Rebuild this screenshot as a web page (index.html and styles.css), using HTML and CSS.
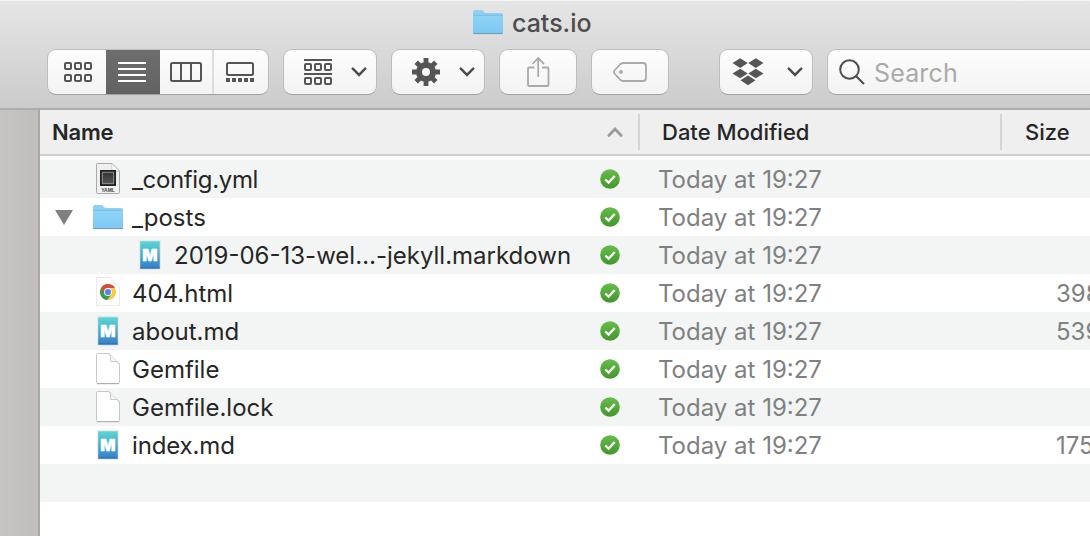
FILE: index.html
```html
<!DOCTYPE html>
<html lang="en">
<head>
<meta charset="utf-8">
<title>cats.io</title>
<link rel="stylesheet" href="styles.css">
</head>
<body>
<svg class="defs" aria-hidden="true">
  <defs>
    <linearGradient id="blue" x2="0" y2="1"><stop stop-color="#90d5f7"/><stop offset="1" stop-color="#7cc7f3"/></linearGradient>
    <linearGradient id="teal" x2="0" y2="1"><stop stop-color="#5bd6d3"/><stop offset="1" stop-color="#347fc9"/></linearGradient>
    <linearGradient id="green" x2="0" y2="1"><stop stop-color="#65bd4b"/><stop offset="1" stop-color="#43962b"/></linearGradient>
    <linearGradient id="dark" x2="0" y2="1"><stop stop-color="#333"/><stop offset="1" stop-color="#555"/></linearGradient>
    <linearGradient id="fold" x1="0" y1="1" x2="1" y2="0"><stop stop-color="#fff"/><stop offset=".5" stop-color="#f2f2f2"/><stop offset="1" stop-color="#bbb"/></linearGradient>
    <symbol id="folder" viewBox="0 0 32 28">
      <path d="M1 5Q1 2 3 2H9Q11 2 12 4Q13 5 15 5H29Q31 5 31 7V25H1Z" fill="#8fd0f2"/>
      <path d="M1 7H31V24.5Q31 25.5 30 25.5H2Q1 25.5 1 24.5Z" fill="url(#blue)"/>
      <path d="M1 7.3H31" stroke="#6fb9e2" stroke-width=".8"/>
      <path d="M1.2 25.6H30.8" stroke="#6798b3" stroke-width="1"/>
    </symbol>
    <symbol id="page" viewBox="0 0 26 34">
      <path d="M2.5 1.5H14L24.5 12V30.5Q24.5 31.5 23.5 31.5H2.5Q1.5 31.5 1.5 30.5V2.5Q1.5 1.5 2.5 1.5Z" fill="#fff" stroke="#c8c8c8"/>
      <path d="M2 31.7H24" stroke="#aaa" stroke-width="1"/>
      <path d="M14.5 1.7Q16 3 15.6 9.5H22Q23.5 10 24.3 12" fill="url(#fold)" stroke="#c4c4c4" stroke-width=".9"/>
    </symbol>
    <symbol id="yaml" viewBox="0 0 26 34">
      <path d="M2.5 1.5H17L24.5 9V30.5Q24.5 31.5 23.5 31.5H2.5Q1.5 31.5 1.5 30.5V2.5Q1.5 1.5 2.5 1.5Z" fill="#efefef" stroke="#aaa"/>
      <path d="M17 1.7V9H24.3Z" fill="#fff" stroke="#bbb" stroke-width=".7"/>
      <path d="M5 8H21V24H5Z" fill="#222"/>
      <path d="M7.3 10.3H18.7V21.7H7.3Z" fill="url(#dark)" stroke="#aaa" stroke-width=".8"/>
      <text x="13" y="29.5" class="yaml-label">YAML</text>
    </symbol>
    <symbol id="md" viewBox="0 0 22 30">
      <path d="M.5.5H21.5V29.5H.5Z" fill="#d5dde0"/>
      <path d="M1.3 1.3H20.7V28.5H1.3Z" fill="url(#teal)"/>
      <path d="M1.3 28H20.7" stroke="#2c69ba" stroke-width="1"/>
      <text x="11" y="20.6" class="md-label">M</text>
    </symbol>
    <symbol id="chrome" viewBox="0 0 26 34">
      <path d="M1.5 1.5H15L24.5 11V29.5H1.5Z" fill="#fefefe" stroke="#e9e9e9"/>
      <path d="M14 2Q16 3 16 7Q22 7 24.3 11Z" fill="url(#fold)"/>
      <circle cx="13" cy="16" r="8" fill="#f7cc45"/>
      <path d="M13 16L6.1 12A8 8 0 0 0 12.2 24L16.5 18Z" fill="#379b53"/>
      <path d="M13 16L9.5 18L6.1 12A8 8 0 0 1 20 12H13Z" fill="#d84c3f"/>
      <circle cx="13" cy="16" r="4" fill="#f4f4f4"/>
      <circle cx="13" cy="16" r="3.1" fill="#5089ee"/>
    </symbol>
    <symbol id="check" viewBox="0 0 20 20">
      <circle cx="10" cy="10" r="9.8" fill="url(#green)"/>
      <path d="M5.3 10.5L8.6 13.6L14.7 7" fill="none" stroke="#fff" stroke-width="2.3"/>
    </symbol>
    <symbol id="chevron" viewBox="0 0 16 10"><path d="M1.8 1.7L8 7.9L14.2 1.7" fill="none" stroke="#4d4d4d" stroke-width="2.5" stroke-linecap="round"/></symbol>
    <symbol id="squares" viewBox="0 0 28 8"><path d="M2 1H6Q7 1 7 2V6Q7 7 6 7H2Q1 7 1 6V2Q1 1 2 1ZM12 1H16Q17 1 17 2V6Q17 7 16 7H12Q11 7 11 6V2Q11 1 12 1ZM22 1H26Q27 1 27 2V6Q27 7 26 7H22Q21 7 21 6V2Q21 1 22 1Z" fill="none" stroke="#555" stroke-width="2"/></symbol>
  </defs>
</svg>
<div class="window">
  <header class="chrome-bar">
    <div class="title"><svg width="32" height="28"><use href="#folder"/></svg><span>cats.io</span></div>
    <div class="toolbar">
      <div class="button views">
        <span class="view icons"><svg width="28" height="20"><use href="#squares" width="28" height="8"/><use href="#squares" y="12" width="28" height="8"/></svg></span>
        <span class="view active"><svg width="28" height="20"><path d="M0 1H28M0 7H28M0 13H28M0 19H28" stroke="#fff" stroke-width="2"/></svg></span>
        <span class="view columns"><svg width="32" height="20" fill="none" stroke="#555" stroke-width="2"><rect x="1" y="1" width="30" height="18" rx="1.5"/><path d="M11 1V19M21 1V19"/></svg></span>
        <span class="view gallery"><svg width="28" height="20"><rect x="1" y="1" width="26" height="12" rx="1.5" fill="none" stroke="#555" stroke-width="2"/><path d="M0 18H28" stroke="#555" stroke-width="4" stroke-dasharray="4 2"/></svg></span>
      </div>
      <div class="button menu">
        <svg width="28" height="26"><path d="M0 1H28M0 15H28" stroke="#555" stroke-width="2"/><use href="#squares" y="4" width="28" height="8"/><use href="#squares" y="18" width="28" height="8"/></svg>
        <svg width="16" height="10"><use href="#chevron"/></svg>
      </div>
      <div class="button menu gear">
        <svg width="28" height="28" viewBox="-14 -14 28 28"><circle r="7" fill="none" stroke="#555" stroke-width="6"/><g stroke="#555" stroke-width="4.8" stroke-linejoin="round"><path d="M0-14V-8M0 14V8M-14 0H-8M14 0H8M-9.8-9.8L-6-6M9.8 9.8L6 6M9.8-9.8L6-6M-9.8 9.8L-6 6"/></g></svg>
        <svg width="16" height="10"><use href="#chevron"/></svg>
      </div>
      <div class="button single share"><svg width="24" height="32" fill="none" stroke="#aaa" stroke-width="1.8"><path d="M8.5 11.5H3Q2 11.5 2 12.5V29Q2 30 3 30H21.5Q22.5 30 22.5 29V12.5Q22.5 11.5 21.5 11.5H16M12.2 21V2M6.5 8L12.2 2L18 8"/></svg></div>
      <div class="button single tag"><svg width="34" height="20"><path d="M10 1H30Q33 1 33 4V16Q33 19 30 19H10Q8.500 19 7 17.500L1.500 11.500Q.500 10 1.500 8.500L7 2.500Q8.500 1 10 1Z" fill="none" stroke="#aaa" stroke-width="1.800"/><circle cx="8" cy="10" r="2" fill="#aaa"/></svg></div>
      <div class="button menu dropbox">
        <svg width="32" height="28" fill="#555"><path d="M8.200.300L15.700 5.100L8.200 9.900L.500 5.100ZM23.800.300L31.500 5.100L23.800 9.900L16.300 5.100ZM8.200 10.700L15.700 15.500L8.200 20.300L.500 15.500ZM23.800 10.700L31.500 15.500L23.800 20.300L16.300 15.500ZM16 17.400L23.500 22.200L16 27.300L8.500 22.200Z"/></svg>
        <svg width="16" height="10"><use href="#chevron"/></svg>
      </div>
      <div class="button search"><svg width="26" height="26" fill="none" stroke="#4d4d4d" stroke-width="2"><circle cx="10.500" cy="10.500" r="9.300"/><path d="M17.200 17.200L25 25"/></svg><span>Search</span></div>
    </div>
  </header>
  <div class="body">
    <aside class="sidebar"></aside>
    <main class="list">
      <div class="head">
        <div class="h-name"><span>Name</span><svg width="16" height="10"><path d="M1.800 8.500L8 2L14.200 8.500" fill="none" stroke="#999" stroke-width="2.600" stroke-linecap="round"/></svg></div>
        <div class="h-date"><span>Date Modified</span></div>
        <div class="h-size"><span>Size</span></div>
      </div>
      <div class="rows">
        <div class="row"><span class="arrow"></span><svg class="file" width="26" height="34"><use href="#yaml"/></svg><span class="name tight">_config.yml</span><svg class="ok"><use href="#check"/></svg><span class="date">Today at 19:27</span></div>
        <div class="row"><span class="arrow"><svg width="18" height="15"><path d="M0 0H18L9 15Z" fill="#808080"/></svg></span><svg class="file" width="32" height="28"><use href="#folder"/></svg><span class="name">_posts</span><svg class="ok"><use href="#check"/></svg><span class="date">Today at 19:27</span></div>
        <div class="row nested"><span class="arrow"></span><svg class="file" width="22" height="30"><use href="#md"/></svg><span class="name">2019-06-13-wel…-jekyll.markdown</span><svg class="ok"><use href="#check"/></svg><span class="date">Today at 19:27</span></div>
        <div class="row"><span class="arrow"></span><svg class="file" width="26" height="34"><use href="#chrome"/></svg><span class="name">404.html</span><svg class="ok"><use href="#check"/></svg><span class="date">Today at 19:27</span><span class="size">398</span></div>
        <div class="row"><span class="arrow"></span><svg class="file" width="22" height="30"><use href="#md"/></svg><span class="name">about.md</span><svg class="ok"><use href="#check"/></svg><span class="date">Today at 19:27</span><span class="size">539</span></div>
        <div class="row"><span class="arrow"></span><svg class="file" width="26" height="34"><use href="#page"/></svg><span class="name">Gemfile</span><svg class="ok"><use href="#check"/></svg><span class="date">Today at 19:27</span></div>
        <div class="row"><span class="arrow"></span><svg class="file" width="26" height="34"><use href="#page"/></svg><span class="name">Gemfile.lock</span><svg class="ok"><use href="#check"/></svg><span class="date">Today at 19:27</span></div>
        <div class="row"><span class="arrow"></span><svg class="file" width="22" height="30"><use href="#md"/></svg><span class="name snug">index.md</span><svg class="ok"><use href="#check"/></svg><span class="date">Today at 19:27</span><span class="size">175</span></div>
        <div class="row"></div>
      </div>
    </main>
  </div>
</div>
</body>
</html>
```
FILE: styles.css
```css
* { box-sizing: border-box; }
body { margin: 0; font-family: Inter, "Liberation Sans", sans-serif; font-size: 24px; color: #262626; overflow: hidden; }
.defs { position: absolute; width: 0; height: 0; }
svg { display: block; flex: none; }
span { white-space: nowrap; }
.window { width: 1090px; height: 536px; display: flex; flex-direction: column; overflow: hidden; }
.chrome-bar { height: 110px; flex: none; border-top: 1px solid #f4f4f4; border-bottom: 2px solid #adadad; background: linear-gradient(#e6e6e6, #cbcbcb); }
.title { height: 48px; padding: 7px 0 0 472px; display: flex; gap: 8px; line-height: 30px; color: #4d4d4d; }
.title span { font-size: 25px; font-weight: 500; letter-spacing: 0; }
.toolbar { display: flex; padding-left: 47px; }
.button { height: 46px; flex: none; display: flex; align-items: center; border: 1px solid #bdbdbd; border-bottom-color: #a0a0a0; border-radius: 9px; background: linear-gradient(#fdfdfd, #f3f3f3); overflow: hidden; }
.views { width: 222px; margin-right: 14px; }
.view { height: 46px; flex: none; display: flex; align-items: center; justify-content: center; }
.icons { width: 58px; padding-left: 1px; }
.active { width: 54px; padding-right: 2px; background: linear-gradient(#6e6e6e, #626262); }
.columns { width: 52px; }
.gallery { width: 56px; border-left: 2px solid #ddd; padding-right: 2px; }
.menu { width: 94px; margin-right: 14px; padding-left: 20px; gap: 19px; }
.single { width: 78px; margin-right: 14px; justify-content: center; }
.dropbox { margin: 0 14px 0 36px; padding-left: 12px; gap: 23px; }
.search { width: 300px; padding-left: 11px; gap: 9px; color: #aaa; font-size: 25px; }
.search span { padding-top: 2px; letter-spacing: 0.15px; }
.body { flex: 1; display: flex; }
.sidebar { width: 40px; flex: none; background: linear-gradient(90deg, #c7c5c3, #c0bebc); border-right: 2px solid #aaa6a3; }
.list { width: 1050px; flex: none; background: #fff; overflow: hidden; }
.head { height: 46px; display: flex; border-bottom: 2px solid #d0d0d0; background: #efefef; line-height: 45px; font-size: 22px; }
.h-name { width: 598px; flex: none; padding: 0 15px 0 12px; display: flex; align-items: center; justify-content: space-between; font-weight: 600; letter-spacing: -0.2px; }
.h-date, .h-size { flex: none; background: linear-gradient(#d4d4d4, #d4d4d4) 0 4px / 2px 36px no-repeat; font-weight: 500; }
.h-date { width: 362px; padding-left: 24px; }
.h-size { width: 90px; padding-left: 25px; }
.rows { padding-top: 4px; }
.row { height: 38px; display: flex; align-items: center; line-height: 38px; }
.row > span { padding-top: 2px; }
.row:nth-child(odd) { background: #f3f5f4; }
.row > .arrow { width: 52px; padding: 0 0 0 15px; flex: none; }
.file { width: 32px; }
.nested > .arrow { width: 94px; }
.name { width: 476px; flex: none; padding-left: 8px; }
.nested .name { width: 434px; }
.tight { letter-spacing: -0.35px; }
.snug { letter-spacing: -0.15px; }
.ok { width: 20px; height: 20px; margin-right: 39px; }
.date { width: 398px; flex: none; margin-left: -1px; color: #808080; }
.size { color: #808080; }
.yaml-label { font: 700 5px "Liberation Sans", sans-serif; fill: #444; text-anchor: middle; }
.md-label { font: 900 16px Inter, sans-serif; fill: #fff; stroke: #fff; stroke-width: 0.4px; text-anchor: middle; }
```
